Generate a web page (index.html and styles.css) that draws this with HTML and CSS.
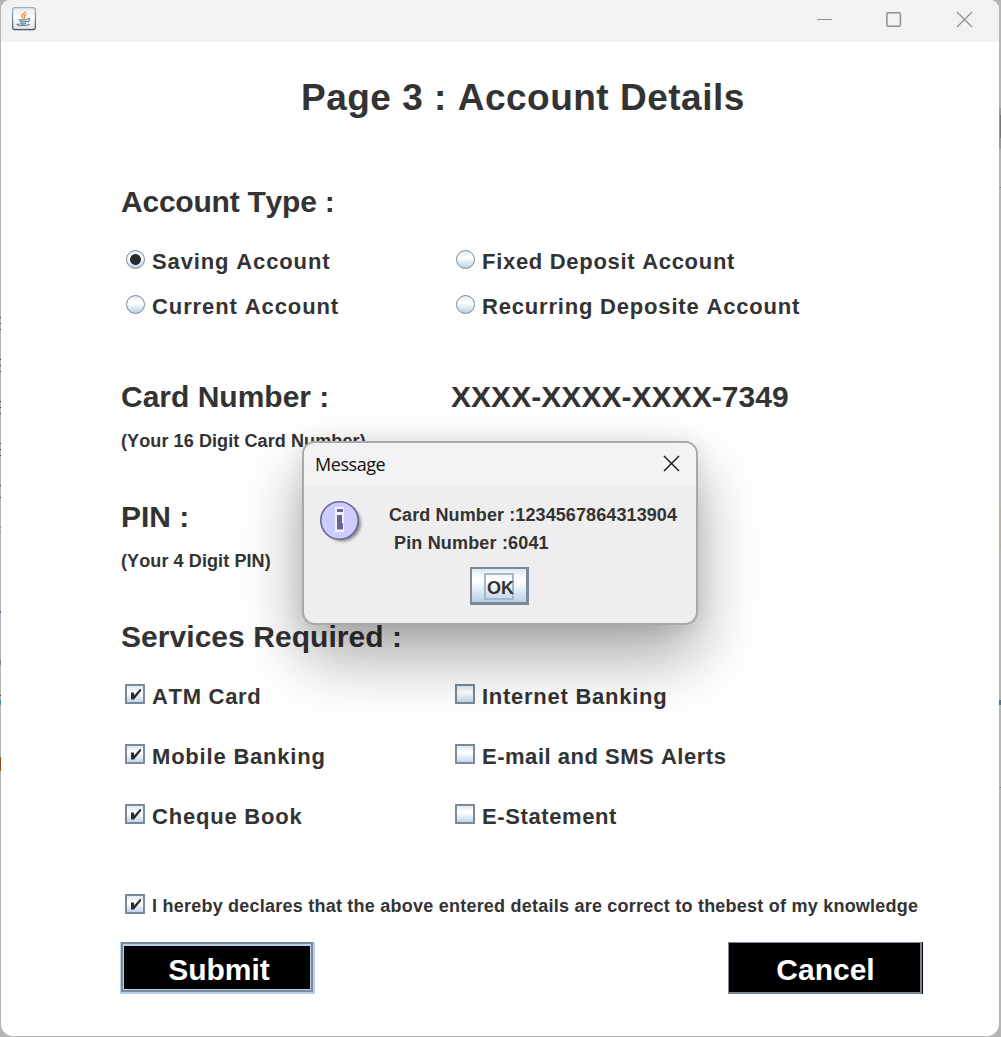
FILE: index.html
```html
<!DOCTYPE html>
<html lang="en">
<head>
<meta charset="utf-8">
<title>Account Details</title>
<link rel="stylesheet" href="styles.css">
</head>
<body>
<div class="window">
  <header class="titlebar">
    <svg class="java" width="24" height="24" viewBox="0 0 24 24">
      <defs>
        <linearGradient id="jb" x1="0" y1="0" x2="0" y2="1"><stop offset="0" stop-color="#9fb2c0"/><stop offset="1" stop-color="#3f5868"/></linearGradient>
        <linearGradient id="jf" x1="0" y1="0" x2="0" y2="1"><stop offset="0" stop-color="#e9e9e9"/><stop offset=".5" stop-color="#fff"/><stop offset="1" stop-color="#dcdcdc"/></linearGradient>
      </defs>
      <rect x=".6" y=".6" width="22.8" height="22" rx="2.4" fill="url(#jf)" stroke="url(#jb)" stroke-width="1.2"/>
      <path d="M13 4.5c.6 1.700-3.200 2.600-3.200 4.600 0 1 .8 1.600 1.400 2.600M14.400 7.300c-2 .7-2.800 1.700-1.800 2.800.5.6.3 1-.2 1.500" fill="none" stroke="#ec8a35" stroke-width="1.300"/>
      <path d="M7 12.200c-1.500.8 7 1 8.500 0M7.500 14.200c1.500 1 6 .8 7.200.1M8.200 16.200c1.400.8 4.600.8 5.800 0M15.500 11.800c3.500-1 2.500 2.600-.5 3M6.500 16.800c-6 1.800 10 2.400 11 .3" fill="none" stroke="#5a7f9c" stroke-width="1.200"/>
    </svg>
    <div class="controls">
      <svg width="17" height="17" viewBox="0 0 17 17"><path d="M1 8.500h15"/></svg>
      <svg width="17" height="17" viewBox="0 0 17 17"><rect x=".9" y="1.750" width="13.500" height="13.500" rx="1.200" stroke-width="1.500"/></svg>
      <svg width="17" height="17" viewBox="0 0 17 17"><path d="M1 1l15 15M16 1L1 16" stroke-width="1.200"/></svg>
    </div>
  </header>
  <main class="form">
    <h1 class="title">Page 3 : Account Details</h1>

    <section class="account">
      <h2 class="heading type">Account Type :</h2>
      <div class="options radios">
        <label class="option"><i class="radio selected"></i><span class="t-saving">Saving Account</span></label>
        <label class="option"><i class="radio"></i><span class="t-fixed">Fixed Deposit Account</span></label>
        <label class="option"><i class="radio"></i><span class="t-current">Current Account</span></label>
        <label class="option"><i class="radio"></i><span class="t-recurring">Recurring Deposite Account</span></label>
      </div>
    </section>

    <section class="card">
      <div class="pair"><h2 class="heading">Card Number :</h2><h2 class="heading number">XXXX-XXXX-XXXX-7349</h2></div>
      <p class="hint">(Your 16 Digit Card Number)</p>
    </section>

    <section class="pin">
      <h2 class="heading">PIN :</h2>
      <p class="hint">(Your 4 Digit PIN)</p>
    </section>

    <section class="services">
      <h2 class="heading number">Services Required :</h2>
      <div class="options checks">
        <label class="option"><i class="check"><svg width="20" height="20" viewBox="0 0 20 20"><path d="M6 8.500h3v3l6-6.500h1v2l-7 8.500H6z"/></svg></i><span class="t-atm">ATM Card</span></label>
        <label class="option"><i class="check"></i><span class="t-internet">Internet Banking</span></label>
        <label class="option"><i class="check"><svg width="20" height="20" viewBox="0 0 20 20"><path d="M6 8.500h3v3l6-6.500h1v2l-7 8.500H6z"/></svg></i><span class="t-mobile">Mobile Banking</span></label>
        <label class="option"><i class="check"></i><span class="t-email">E-mail and SMS Alerts</span></label>
        <label class="option"><i class="check"><svg width="20" height="20" viewBox="0 0 20 20"><path d="M6 8.500h3v3l6-6.500h1v2l-7 8.500H6z"/></svg></i><span class="t-cheque">Cheque Book</span></label>
        <label class="option"><i class="check"></i><span class="t-statement">E-Statement</span></label>
      </div>
    </section>

    <label class="option declare"><i class="check"><svg width="20" height="20" viewBox="0 0 20 20"><path d="M6 8.500h3v3l6-6.500h1v2l-7 8.500H6z"/></svg></i><span class="t-declare">I hereby declares that the above entered details are correct to thebest of my knowledge</span></label>

    <div class="buttons">
      <button class="button submit"><span>Submit</span></button>
      <button class="button cancel">Cancel</button>
    </div>
  </main>
</div>

<div class="dialog">
  <div class="dialog-bar">
    <span class="dialog-title">Message</span>
    <svg width="17" height="17" viewBox="0 0 17 17"><path d="M1 1l15 15M16 1L1 16" fill="none" stroke="#111" stroke-width="1.400"/></svg>
  </div>
  <div class="dialog-body">
    <svg class="info" width="48" height="48" viewBox="0 0 48 48">
      <defs><filter id="soft" x="-20%" y="-20%" width="150%" height="150%"><feGaussianBlur stdDeviation="1.800"/></filter></defs>
      <circle cx="22.500" cy="23" r="18.500" fill="#000" opacity=".4" filter="url(#soft)"/>
      <circle cx="19.500" cy="20.500" r="18.700" fill="#ccccff" stroke="#666699" stroke-width="1.600"/>
      <path d="M15 7h9v7h-9zM15 14h9V32h-9z" fill="#f4f4ff"/>
      <path d="M17 9h6v3h-6zM17 15h5v8h1v6.500h-6z" fill="#666699"/>
    </svg>
    <div class="message">
      <p class="m1">Card Number :1234567864313904</p>
      <p class="m2">Pin Number :6041</p>
    </div>
    <button class="ok"><span>OK</span></button>
  </div>
</div>
</body>
</html>
```
FILE: styles.css
```css
* { box-sizing: border-box; }

body {
  margin: 0;
  width: 1001px;
  height: 1037px;
  overflow: hidden;
  position: relative;
  background:
    linear-gradient(#3d4444 0 0) 0 317px / 1px 1px no-repeat,
    linear-gradient(#3d4444 0 0) 0 323px / 1px 1px no-repeat,
    linear-gradient(#3d4444 0 0) 0 329px / 1px 1px no-repeat,
    linear-gradient(#3d4444 0 0) 0 359px / 1px 1px no-repeat,
    linear-gradient(#3d4444 0 0) 0 365px / 1px 1px no-repeat,
    linear-gradient(#3d4444 0 0) 0 371px / 1px 1px no-repeat,
    linear-gradient(#3d4444 0 0) 0 401px / 1px 1px no-repeat,
    linear-gradient(#3d4444 0 0) 0 407px / 1px 1px no-repeat,
    linear-gradient(#3d4444 0 0) 0 413px / 1px 1px no-repeat,
    linear-gradient(#3d4444 0 0) 0 443px / 1px 1px no-repeat,
    linear-gradient(#3d4444 0 0) 0 449px / 1px 1px no-repeat,
    linear-gradient(#3d4444 0 0) 0 455px / 1px 1px no-repeat,
    linear-gradient(#3d4444 0 0) 0 485px / 1px 1px no-repeat,
    linear-gradient(#3d4444 0 0) 0 497px / 1px 1px no-repeat,
    linear-gradient(#b565a5 0 0) 0 527px / 1px 1px no-repeat,
    linear-gradient(#b565a5 0 0) 0 532px / 1px 1px no-repeat,
    linear-gradient(#4a6ea5 0 0) 0 611px / 1px 2px no-repeat,
    linear-gradient(#8a7a8a 0 0) 0 660px / 1px 5px no-repeat,
    linear-gradient(#3d4444 0 0) 0 695px / 1px 1px no-repeat,
    linear-gradient(#4a7fb5 0 0) 0 700px / 1px 5px no-repeat,
    linear-gradient(#8a4a25 0 0) 0 757px / 1px 14px no-repeat,
    linear-gradient(#777 0 0) 1000px 115px / 1px 23px no-repeat,
    linear-gradient(#9a9a9a 0 0) 999px 108px / 2px 41px no-repeat,
    linear-gradient(#888 0 0) 999px 187px / 2px 1px no-repeat,
    linear-gradient(#b5b2a2 0 0) 999px 508px / 2px 42px no-repeat,
    linear-gradient(#4a74a0 0 0) 999px 700px / 2px 5px no-repeat,
    linear-gradient(#888 0 0) 999px 787px / 2px 1px no-repeat,
    #b5b5b5;
  font-family: "Liberation Sans", Arial, sans-serif;
  font-weight: bold;
  color: #333;
  font-kerning: none;
}

h1, h2, p { margin: 0; }

.window {
  margin-left: 1px;
  width: 998px;
  height: 1036px;
  background: #fff;
  border-radius: 9px 9px 12px 12px;
  overflow: hidden;
}

.titlebar {
  height: 42px;
  background: #f2f2f2;
  display: flex;
  justify-content: space-between;
  padding: 7px 26px 0 11px;
}

.controls { display: flex; gap: 53px; padding-top: 4px; }
.controls svg { fill: none; stroke: #8f8f8f; }

.form { padding: 33px 0 0 120px; }

.title {
  height: 44px;
  line-height: 46px;
  padding-left: 180px;
  font-size: 37px;
  letter-spacing: .5px;
  white-space: nowrap;
}

.account { padding-top: 60px; }
.heading { height: 45px; line-height: 45px; font-size: 30px; white-space: nowrap; }
.type { letter-spacing: -.23px; }
.number { letter-spacing: .05px; }

.options { display: grid; grid-template-columns: 330px 1fr; }
.radios { margin-top: 15px; grid-auto-rows: 45px; }
.checks { margin-top: 7px; grid-auto-rows: 60px; }
.checks span, .declare span { padding-top: 2px; }

.option {
  display: flex;
  align-items: center;
  padding-left: 4px;
  gap: 7px;
  font-size: 22px;
  letter-spacing: .87px;
  white-space: nowrap;
}

.t-fixed { letter-spacing: .7px; }
.t-recurring { letter-spacing: .81px; }
.t-current { letter-spacing: .9px; }
.t-atm { letter-spacing: .7px; }
.t-internet { letter-spacing: .74px; }
.t-mobile { letter-spacing: .8px; }
.t-email { letter-spacing: .52px; }
.t-cheque { letter-spacing: .79px; }
.t-statement { letter-spacing: .6px; }

.radio, .check { flex: none; width: 20px; height: 20px; margin-bottom: 4px; }

.radio {
  width: 19px;
  height: 19px;
  border: 1.5px solid #7a8a99;
  border-radius: 50%;
  background: linear-gradient(#dde8f3 0%, #fff 35%, #fff 42%, #b8cfe5 100%);
  margin: 0 .5px 5px;
}

.selected {
  background:
    radial-gradient(circle, #2b2b2b 5px, transparent 5.8px),
    linear-gradient(#dde8f3 0%, #fff 35%, #fff 42%, #b8cfe5 100%);
}

.check {
  border: 2px solid #7a8a99;
  background: linear-gradient(#dde8f3 0%, #fff 35%, #fff 42%, #c3d6ea 100%);
}

.check svg { display: block; margin: -2px; fill: #2b2b2b; }

.card { padding-top: 45px; }
.pair { display: grid; grid-template-columns: 330px 1fr; }
.hint { height: 43px; line-height: 45px; font-size: 18px; letter-spacing: .1px; }
.pin { padding-top: 32px; }
.services { padding-top: 32px; }

.declare { height: 45px; margin-top: 37px; font-size: 18px; letter-spacing: .23px; }

.buttons { display: flex; justify-content: space-between; width: 802px; margin-top: 14px; }

.button {
  font: bold 30px "Liberation Sans", Arial, sans-serif;
  color: #fff;
  background: #000;
  padding: 0;
  height: 52px;
}

.submit {
  width: 195px;
  margin-left: -1px;
  border: solid #b8cfe5;
  border-width: 0 2px 2px 1px;
}

.submit span {
  display: grid;
  place-items: center;
  height: 50px;
  border: 2px solid #7a8a99;
  box-shadow: inset 0 0 0 1px #b8cfe5, inset 0 2px 0 #b8cfe5;
  padding: 5px 0 0 4px;
}

.cancel {
  width: 194px;
  margin-right: 1px;
  border: solid #7a8a99;
  border-width: 1px 2px 2px 1px;
  box-shadow: 1px 0 0 #000;
  padding: 4px 0 0 2px;
}

/* Modal dialog floating over the form */
.dialog {
  position: absolute;
  left: 302px;
  top: 441px;
  width: 396px;
  height: 184px;
  border: 2px solid #a9a9a9;
  border-radius: 13px;
  background: #eee;
  box-shadow: 0 32px 64px rgba(0, 0, 0, .35), 0 2px 21px rgba(0, 0, 0, .1);
}

.dialog-bar {
  height: 43px;
  display: flex;
  align-items: center;
  justify-content: space-between;
  padding: 0 16px 2px 11px;
  background: #f3f2f4;
  border-radius: 11px 11px 0 0;
}

.dialog-title {
  font: 18px "Open Sans", "Noto Sans", sans-serif;
  letter-spacing: -.45px;
  color: #111;
}

.dialog-body {
  display: grid;
  grid-template-columns: 69px 1fr;
  padding: 14px 0 0 16px;
  font-size: 18px;
}

.message { padding-top: 1px; line-height: 28px; white-space: nowrap; }
.m1 { letter-spacing: .1px; }
.m2 { padding-left: 5px; letter-spacing: .17px; }

.ok {
  grid-column: 1 / 3;
  width: 59px;
  height: 38px;
  margin: 10px 0 0 150px;
  padding: 1px 0 0 12px;
  border: solid #7a8a99;
  border-width: 2px 3px 3px 2px;
  background: linear-gradient(#dde8f3 0%, #fff 30%, #fff 38%, #b8cfe5 100%);
  font: bold 18px "Liberation Sans", Arial, sans-serif;
  color: #333;
}

.ok span {
  display: grid;
  place-items: center;
  width: 30px;
  height: 27px;
  padding: 3px 0 0 1px;
  border: 2px solid #a3b8cc;
}
```
